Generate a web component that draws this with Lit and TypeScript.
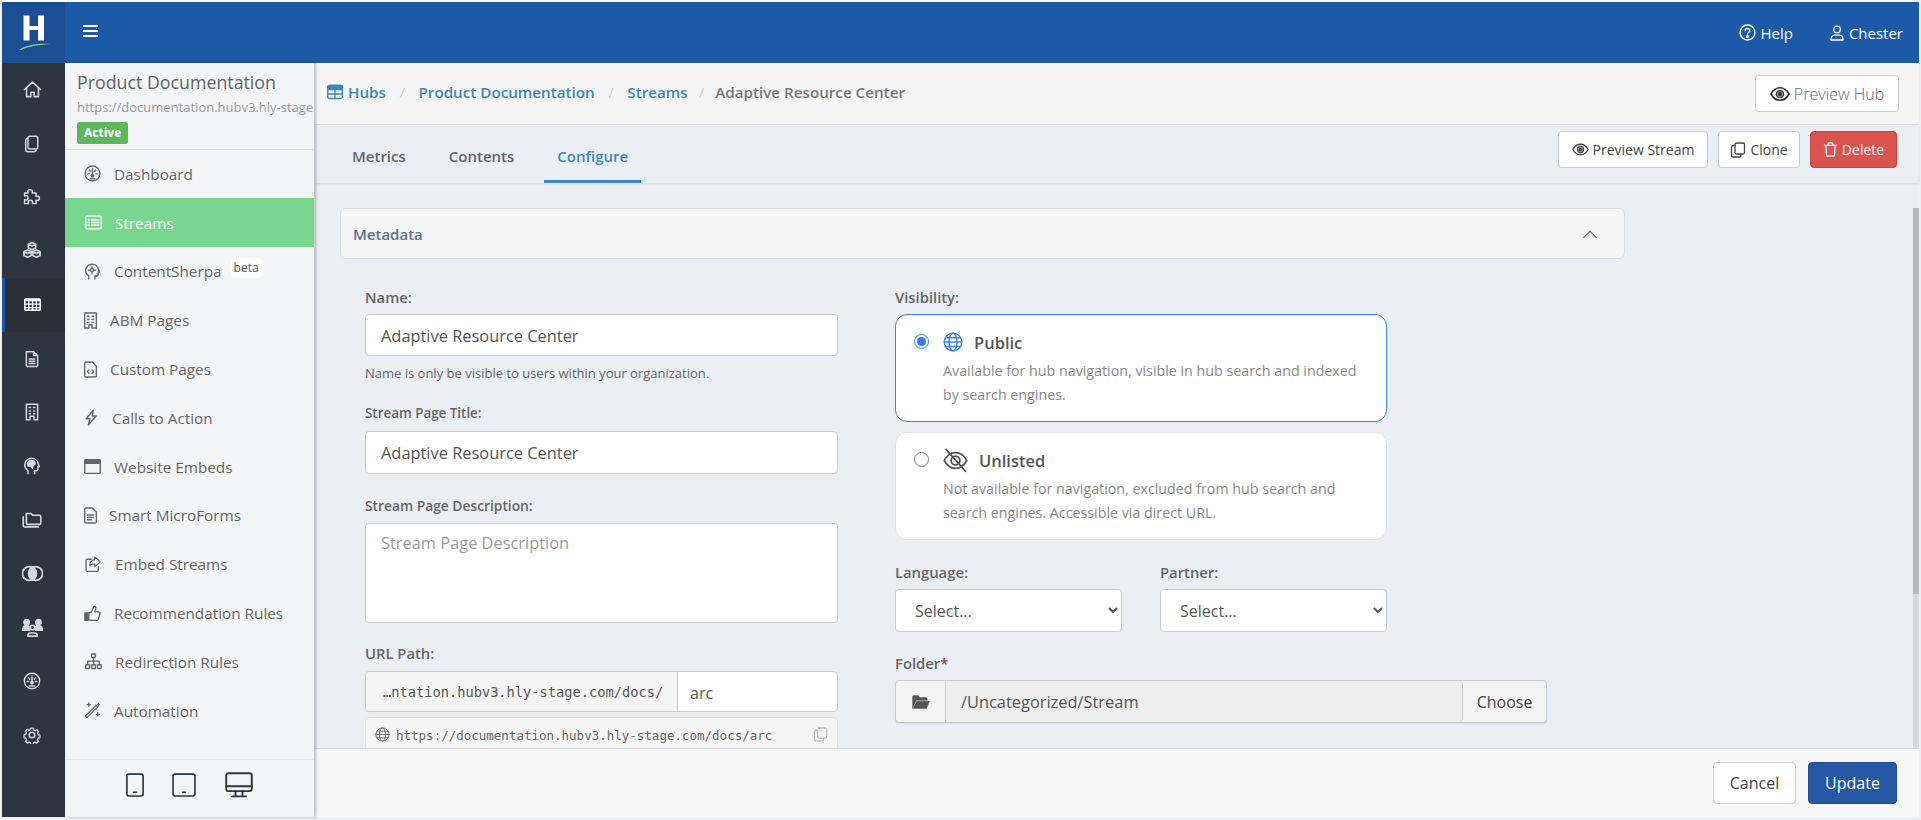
// app.ts — hub stream configure screen
import { LitElement, html, css, svg } from 'lit';
import { customElement } from 'lit/decorators.js';

// Stroke icons, all on a 16x16 box
const ICONS: Record<string, unknown> = {
  house: svg`<path d="M1.2 8 8 1.8 14.8 8M3 6.6V14h3.6v-3.6h2.8V14H13V6.6"/>`,
  files: svg`<path d="M6 1.2h5.500a1.600 1.600 0 0 1 1.600 1.600v8a1.600 1.600 0 0 1-1.600 1.600H6a1.600 1.600 0 0 1-1.600-1.600v-8A1.600 1.600 0 0 1 6 1.200Z"/><path d="M4.400 3H4a1.600 1.600 0 0 0-1.600 1.600v8.200A2 2 0 0 0 4.400 14.800H10a1.600 1.600 0 0 0 1.600-1.600"/>`,
  puzzle: svg`<path d="M6.200 1.500c1.400 0 2.200.8 2.200 1.800 0 .5-.3.9-.4 1.200h3.600v3c.4-.2.8-.4 1.200-.4 1 0 1.800.8 1.800 2s-.8 2-1.800 2c-.4 0-.8-.2-1.200-.4v3.200H8.200c.2-.4.4-.8.4-1.200 0-1-.9-1.800-2-1.800s-2 .8-2 1.800c0 .4.2.8.4 1.200H1.400v-3.600c.4.2.8.4 1.200.4 1 0 1.800-.8 1.800-2s-.8-2-1.800-2c-.4 0-.8.2-1.200.4V4.500h3.200c-.1-.3-.4-.7-.4-1.200 0-1 .8-1.800 2-1.800Z"/>`,
  boxes: svg`<path d="m8 1.200 3 1.400v3L8 7 5 5.600v-3Zm-3.500 6 3 1.400v3l-3 1.400-3-1.400v-3Zm7 0 3 1.400v3l-3 1.400-3-1.400v-3ZM5 2.600l3 1.400 3-1.400M1.500 8.600l3 1.400 3-1.400m1 0 3 1.400 3-1.400"/>`,
  grid: svg`<path class="fill solid" fill-rule="evenodd" d="M1.500 2h13A1.500 1.500 0 0 1 16 3.500v9a1.500 1.500 0 0 1-1.500 1.500h-13A1.500 1.500 0 0 1 0 12.500v-9A1.500 1.500 0 0 1 1.500 2ZM1.500 5v2h2.400V5Zm3.700 0v2h2.200V5Zm3.500 0v2h2.200V5Zm3.500 0v2h2.300V5ZM1.500 8.300v2h2.400v-2Zm3.700 0v2h2.200v-2Zm3.500 0v2h2.200v-2Zm3.500 0v2h2.300v-2ZM1.500 11.500v1.300h2.400v-1.300Zm3.700 0v1.300h2.200v-1.300Zm3.500 0v1.300h2.200v-1.300Zm3.500 0v1.300h2.300v-1.300Z"/>`,
  doc: svg`<path d="M3 1.500h6.500L13 5v8.500a1.200 1.200 0 0 1-1.200 1.200H4.200A1.200 1.200 0 0 1 3 13.500ZM9.500 1.500V5H13"/><path d="M5.500 8h5M5.500 10h5M5.500 12h5"/>`,
  building: svg`<path d="M3 1.200h10v13.600H9.800v-3H6.200v3H3Z"/><path d="M5.500 4h1.200M9.300 4h1.200M5.500 7h1.200M9.300 7h1.200M5.500 9.500h1.200M9.300 9.500h1.200"/>`,
  brain: svg`<path d="M4.500 14.800v-2.600C2.800 11 1.500 9.300 1.500 7.200 1.500 3.800 4.200 1.200 7.600 1.200c3.100 0 5.700 2.100 6 5l1 2.300h-1.300v2.300c0 .8-.6 1.400-1.400 1.400h-1.600v2.600"/><path class="fill" d="M4 6c.4-1.800 2-3 3.800-2.800 1.600.2 3 1.500 3 3L9 7.500 8.400 10 6.500 8 4.500 8Z"/>`,
  folders: svg`<path d="M3.500 4V2.800h3.700l1.300 1.400h5.500a1 1 0 0 1 1 1v5.300a1 1 0 0 1-1 1H4.500a1 1 0 0 1-1-1Z"/><path d="M1 5.500v6.700a1.300 1.300 0 0 0 1.300 1.300H13"/>`,
  circles: svg`<circle cx="5.600" cy="8" r="5.300"/><circle cx="10.400" cy="8" r="5.300"/><path class="fill" d="M8 3.270A5.300 5.300 0 0 0 8 12.730 5.300 5.300 0 0 0 8 3.270Z"/>`,
  people: svg`<circle cx="8" cy="8" r="1.700"/><path d="M4.500 14.500v-.6c0-1 .9-1.700 2-1.700h3c1.100 0 2 .7 2 1.700v.6Z"/><circle class="fill" cx="3.500" cy="4" r="2"/><circle class="fill" cx="12.500" cy="4" r="2"/><path class="fill" d="M.5 10c0-2 1-3.400 3-3.400 1 0 1.500.3 2 .8-.4 1-.2 1.800.3 2.600Zm15 0c0-2-1-3.400-3-3.400-1 0-1.500.3-2 .8.400 1 .2 1.800-.3 2.600Z"/>`,
  gauge: svg`<circle cx="8" cy="8" r="6.800"/><path d="M8 3.500v5.500M5 5.200l1 1.300M11 5.200 10 6.500M3.800 8.500h1.400M10.800 8.500h1.400M5.500 12.500h5"/><circle class="fill" cx="8" cy="9.500" r="1"/>`,
  gear: svg`<circle cx="8" cy="8" r="2.500"/><path d="M6.700 1.300h2.600l.4 1.900 1.300.6 1.700-1 1.800 1.900-1 1.600.5 1.300 1.800.5v2.600l-1.800.5-.5 1.300 1 1.700-1.800 1.800-1.700-1-1.300.5-.4 1.800H6.700l-.4-1.800-1.300-.5-1.700 1-1.800-1.800 1-1.700-.5-1.300-1.800-.5V7.600l1.800-.5.5-1.300-1-1.600 1.800-1.900 1.700 1 1.300-.6Z" transform="translate(.8 .8) scale(.9)"/>`,
  dash: svg`<circle cx="8" cy="8" r="7"/><path d="M8 3.200v5.600M5.200 4.800l1 1.500M10.800 4.800l-1 1.500M3.500 8.300h1.600M10.900 8.300h1.600M5.800 13h4.400"/><circle class="fill" cx="8" cy="10" r="1.200"/>`,
  list: svg`<rect x=".7" y="2" width="14.600" height="12" rx="1.400"/><path d="M3 5.500h1.200M6 5.500h7M3 8h1.200M6 8h7M3 10.500h1.200M6 10.500h7"/>`,
  sherpa: svg`<path d="M4.500 15v-2.800C2.800 11 1.500 9.300 1.500 7.200 1.500 3.800 4.200 1.200 7.600 1.200c3.100 0 5.700 2.100 6 5l1 2.300h-1.300v2.300c0 .8-.6 1.400-1.400 1.400h-1.600V15"/><circle cx="7.500" cy="6.800" r="1.500"/><path d="M7.500 3.400v1.200M7.500 9v1.200M4.200 6.800h1.200M9.700 6.800h1.100"/>`,
  abm: svg`<path d="M2.500 1h11v14h-4v-3h-3v3h-4Z"/><path d="M5 4h1.500M9.500 4H11M5 7h1.500M9.500 7H11M5 9.800h1.500M9.500 9.800H11"/>`,
  code: svg`<path d="M2.500 2.200A1.200 1.200 0 0 1 3.700 1h6L13.500 5v8.800a1.200 1.200 0 0 1-1.200 1.200H3.700a1.200 1.200 0 0 1-1.200-1.200Z"/><path d="M6.500 8.500 5 10l1.500 1.500M9.500 8.500 11 10l-1.500 1.500"/>`,
  bolt: svg`<path d="M9.800 1 3 9.200h3.600L5 15l7.300-8.400H8.600Z"/>`,
  browser: svg`<rect x=".7" y="1.500" width="14.600" height="13" rx="1.200"/><path class="fill" d="M.7 2.700c0-.7.5-1.200 1.200-1.200h12.200c.7 0 1.200.5 1.200 1.200V5H.7Z"/>`,
  form: svg`<path d="M2.500 2.200A1.200 1.200 0 0 1 3.700 1h6L13.500 5v8.800a1.200 1.200 0 0 1-1.200 1.200H3.700a1.200 1.200 0 0 1-1.200-1.200Z"/><path d="M5.200 7.500h5.600M5.200 9.800h5.600M5.200 12h3.600"/>`,
  share: svg`<path d="M9 8.800v2.900l6-5-6-5v2.900C5.500 4.600 3.800 7.300 3.800 10.500 5.200 9 7 8.800 9 8.800Z" transform="translate(1 -.5) scale(.9)"/><path d="M12.500 10v3.300a1.200 1.200 0 0 1-1.200 1.200H2.200A1.200 1.200 0 0 1 1 13.300V4.200A1.200 1.200 0 0 1 2.200 3H6"/>`,
  thumb: svg`<path d="M4.500 7.200h2l2.300-4.500c.2-1 .8-1.500 1.500-1.200.8.300 1 1.100.8 2L10.100 6.500h3.600c1 0 1.600.9 1.300 1.800l-1.500 5.100c-.2.700-.8 1.100-1.500 1.100H7c-1 0-2.500-.5-2.500-.5Z"/><path class="fill" d="M.8 7.500h3.200v7H.8Z"/>`,
  tree: svg`<rect x="6.200" y="1" width="3.600" height="3.200" rx=".6"/><rect x=".7" y="11" width="3.600" height="3.600" rx=".6"/><rect x="6.200" y="11" width="3.600" height="3.600" rx=".6"/><rect x="11.700" y="11" width="3.600" height="3.600" rx=".6"/><path d="M8 4.200V11M2.500 11V7.600h11V11"/>`,
  magic: svg`<path d="m1.300 14.700 10-10 1.500 1.500-10 10Z" transform="translate(0 -1.500)"/><path d="M4.500 1v3M3 2.500h3M13.500 1.500v2M12.500 2.500h2M13 10v3M11.500 11.500h3"/>`,
  phone: svg`<rect x="2.600" y=".7" width="10.800" height="14.600" rx="1.300"/><path d="M7 12.800h2"/>`,
  tablet: svg`<rect x=".7" y=".7" width="14.600" height="14.600" rx="1.300"/><path d="M7 12.800h2"/>`,
  desktop: svg`<rect x=".7" y="1.300" width="14.600" height="10.200" rx="1.200"/><path d="M.7 8.700h14.600M6 11.500v3M10 11.500v3M4 14.500h8"/>`,
  help: svg`<circle cx="8" cy="8" r="7"/><path d="M5.800 6.200C5.900 4.900 6.800 4.200 8 4.200c1.300 0 2.200.8 2.200 1.900 0 1.700-2.200 1.700-2.200 3.400"/><circle class="fill" cx="8" cy="11.700" r=".8"/>`,
  person: svg`<circle cx="8" cy="4.500" r="3.300"/><path d="M2 15c0-3 1.500-4.800 3.500-4.800h5C12.500 10.200 14 12 14 15Z"/>`,
  eye: svg`<path d="M.8 8C2.500 4.800 5 3 8 3s5.500 1.800 7.200 5C13.500 11.200 11 13 8 13S2.500 11.200.8 8Z"/><circle cx="8" cy="8" r="2.800"/><circle class="fill" cx="8" cy="8" r="1.100"/>`,
  eyeoff: svg`<path d="M.8 8C2.500 4.800 5 3 8 3s5.500 1.800 7.200 5C13.500 11.200 11 13 8 13S2.500 11.200.8 8Z"/><circle cx="8" cy="8" r="2.800"/><path d="M2 1l12.500 14"/>`,
  clone: svg`<rect x="5" y="1" width="9.500" height="11" rx="1.500"/><path d="M5 3.500H3A1.500 1.500 0 0 0 1.500 5v8.500A1.500 1.500 0 0 0 3 15h6.500a1.500 1.500 0 0 0 1.500-1.500V12"/>`,
  trash: svg`<path d="M1.500 3.500h13M5.500 3.500V2A1 1 0 0 1 6.500 1h3a1 1 0 0 1 1 1v1.500M3 3.500l.8 10.500a1 1 0 0 0 1 1h6.400a1 1 0 0 0 1-1L13 3.500"/>`,
  table: svg`<rect x=".7" y="1.500" width="14.600" height="13" rx="1.500"/><path class="fill" d="M.7 3c0-.8.7-1.500 1.500-1.500h11.600c.8 0 1.500.7 1.500 1.500v2.500H.7Z"/><path d="M.7 10h14.600M8 5v9.500"/>`,
  chevron: svg`<path d="M2.500 11 8 5.500l5.500 5.500"/>`,
  globe: svg`<circle cx="8" cy="8" r="7"/><ellipse cx="8" cy="8" rx="3.200" ry="7"/><path d="M1 8h14M2 4.500h12M2 11.500h12"/>`,
  folder: svg`<path class="fill" d="M.5 3.500A1.200 1.200 0 0 1 1.700 2.300h3.800l1.500 1.700h5.300a1.200 1.200 0 0 1 1.200 1.200V6.500H3.800L.5 13Z"/><path class="fill" d="M4.200 7.400h11.300L13 13.700H.8Z"/>`,
};

function icon(name: string, size = 16, stroke = 1.3) {
  return html`<svg class="icon" viewBox="0 0 16 16" width=${size} height=${size} stroke-width=${stroke}>${ICONS[name]}</svg>`;
}

const RAIL: [string, number][] = [
  ['house', 19], ['files', 18], ['puzzle', 18], ['boxes', 20], ['grid', 17], ['doc', 18], ['building', 18],
  ['brain', 18], ['folders', 20], ['circles', 21], ['people', 21], ['gauge', 18], ['gear', 18],
];

// name, icon, width of the icon box, gap to the label
const MENU: [string, string, number, number][] = [
  ['Dashboard', 'dash', 17, 13],
  ['Streams', 'list', 18, 13],
  ['ContentSherpa', 'sherpa', 17, 13],
  ['ABM Pages', 'abm', 13, 13],
  ['Custom Pages', 'code', 13, 13],
  ['Calls to Action', 'bolt', 14, 14],
  ['Website Embeds', 'browser', 16, 14],
  ['Smart MicroForms', 'form', 13, 12],
  ['Embed Streams', 'share', 18, 13],
  ['Recommendation Rules', 'thumb', 17, 13],
  ['Redirection Rules', 'tree', 18, 13],
  ['Automation', 'magic', 17, 13],
];

@customElement('app-root')
export class AppRoot extends LitElement {
  static styles = css`
    :host {
      display: block;
      height: 820px;
      background: #eef0f3;
      font-family: 'Open Sans', 'Liberation Sans', sans-serif;
      color: #666;
      font-size: 14px;
    }
    * { box-sizing: border-box; }

    .icon { fill: none; stroke: currentColor; stroke-linecap: round; stroke-linejoin: round; flex: none; display: block; }
    .icon .fill { fill: currentColor; }
    .icon .solid { stroke: none; }

    .frame {
      height: 817px;
      margin: 0 2px 0 2px;
      padding-top: 2px;
      display: grid;
      grid-template-columns: 63px 1fr;
      grid-template-rows: 61px 1fr;
      background: #fff;
    }

    .logo { background: #1a4f94; display: flex; align-items: center; justify-content: center; }
    .topbar { background: #1c5aa8; color: #fff; display: flex; align-items: center; font-size: 15px; padding: 0 16px 0 18px; }
    .burger { width: 15px; height: 12px; margin-bottom: 3px; border-top: 2px solid #fff; border-bottom: 2px solid #fff; position: relative; }
    .burger::after { content: ''; position: absolute; left: 0; right: 0; top: 3px; height: 2px; background: #fff; }
    .top-right { margin-left: auto; display: flex; gap: 36px; }
    .top-link { display: flex; align-items: center; gap: 4px; }

    .rail { background: #2d353f; color: #d5dae0; display: flex; flex-direction: column; }
    .rail-item { height: 53.75px; display: flex; align-items: center; justify-content: center; padding-right: 3px; }
    .rail-item.on { background: #2a3038; border-left: 3px solid #1c5aa8; color: #fff; }
    .rail-item.on .icon { margin-left: -3px; }

    .shell { display: flex; min-width: 0; min-height: 0; }
    .side { width: 250px; flex: none; background: #f4f5f7; display: flex; flex-direction: column; border-right: 1px solid #c8cacd; box-shadow: 1px 0 3px rgba(0,0,0,.25); z-index: 1; overflow: hidden; }
    .side-head { height: 86.5px; flex: none; padding: 7px 0 0 12px; border-bottom: 1px solid #dfe1e4; }
    .side-title { font-size: 17.8px; line-height: 24px; color: #5f6368; white-space: nowrap; }
    .side-url { font-size: 13px; line-height: 18px; margin-top: 4px; color: #999; white-space: nowrap; }
    .badge { display: inline-block; margin-top: 6px; background: #5cb85c; color: #fff; font-size: 12px; font-weight: 700; line-height: 22px; height: 22px; padding: 0 7px; border-radius: 3px; }
    .menu { flex: 1; }
    .menu-item { height: 48.8px; display: flex; align-items: center; padding-left: 19px; color: #666; font-size: 15.3px; }
    .menu-item.on { background: #79d68f; color: #fff; }
    .menu-icon { display: flex; justify-content: center; }
    .beta { align-self: flex-start; margin: 11px 0 0 8px; background: #fff; font-size: 12px; line-height: 16px; padding: 2px 4px; border-radius: 6px; color: #555; }
    .devices { height: 58px; flex: none; border-top: 1px solid #e6e8ea; display: flex; align-items: center; padding: 0 0 8px 58px; color: #2d353f; }
    .devices .icon:nth-child(2) { margin: 0 29px 0 25px; }

    .main { flex: 1; min-width: 0; display: flex; flex-direction: column; background: #ebeef3; }
    .crumbs { height: 62px; flex: none; background: #f5f5f5; border-bottom: 1px solid #dcdcdc; display: flex; align-items: center; padding: 0 20px 3px 12px; font-size: 15.2px; font-weight: 600; }
    .crumbs a { color: #3a87bd; display: flex; align-items: center; gap: 5px; }
    .crumbs .sep { color: #ccc; font-weight: 400; margin: 0 13.5px; }
    .crumbs .sep.last { margin: 0 11px; }
    .crumbs .cur { color: #777; }
    .btn { display: inline-flex; align-items: center; justify-content: center; gap: 4px; background: #fff; border: 1px solid #ccc; border-radius: 4px; color: #444; font-size: 14px; height: 37px; }
    .preview-hub { margin: 3px 0 0 auto; width: 144px; font-size: 16px; color: #5f6770; font-weight: 300; }
    .preview-hub .icon { color: #333; }

    .tabs { height: 58px; flex: none; display: flex; align-items: flex-end; padding: 0 22px 0 24px; gap: 17px; box-shadow: 0 1px 2px rgba(0,0,0,.08); position: relative; }
    .tab { height: 58px; padding: 4px 13px 0; display: flex; align-items: center; font-size: 15px; font-weight: 600; color: #666; }
    .tab.on { color: #3a87bd; border-bottom: 3px solid #3a87bd; padding-top: 7px; }
    .tab-actions { margin-left: auto; align-self: flex-start; padding-top: 6px; display: flex; gap: 10px; }
    .btn.stream { width: 150px; }
    .btn.clone { width: 82px; }
    .btn.danger { background: #d9534f; border-color: #d43f3a; color: #fff; width: 87px; }

    .scroll { flex: 1; min-height: 0; overflow: hidden; padding: 25px 0 0 25px; position: relative; }
    .scrollbar { position: absolute; top: 25px; right: 0; bottom: 0; width: 6px; background: #d5d8dd; }
    .scrollbar::before { content: ''; display: block; height: 386px; background: #b5b8bd; }
    .meta-head { width: 1285px; height: 51px; background: #f5f5f5; border: 1px solid #ddd; border-radius: 6px; display: flex; align-items: center; justify-content: space-between; padding: 0 25px 0 12px; font-size: 15px; font-weight: 600; color: #5d7185; }
    .form { display: flex; gap: 57px; padding: 28px 0 0 25px; }
    .col-l { width: 473px; flex: none; }
    .col-r { width: 652px; flex: none; }

    label { display: block; font-weight: 600; font-size: 14.8px; line-height: 20px; color: #666; margin-bottom: 7px; }
    label.title { font-size: 13.4px; margin: 21px 0 8px; }
    label.desc { font-size: 13.8px; margin-top: 22px; }
    label.url { margin: 20px 0 8px; }
    .field { display: block; width: 100%; height: 42px; border: 1px solid #ccc; border-radius: 4px; background: #fff; padding: 0 15px; font: 400 16.4px/1.4 'Open Sans', sans-serif; color: #555; outline: none; }
    input.tall { height: 43px; }
    textarea.field { height: 100px; padding-top: 8px; resize: none; }
    textarea.field::placeholder { color: #999; }
    select.field { height: 43px; font-size: 16px; }
    .help { font-size: 13px; line-height: 18px; margin: 8px 0 0; color: #666; }

    .group { display: flex; border: 1px solid #ccc; border-radius: 4px; background: #fff; height: 41px; overflow: hidden; }
    .addon { background: #f5f5f5; border-right: 1px solid #ccc; display: flex; align-items: center; }
    .addon-url { width: 312px; padding-left: 17px; font: 13.7px 'DejaVu Sans Mono', monospace; color: #555; white-space: nowrap; }
    .group-val { padding-left: 12px; display: flex; align-items: center; font-size: 16px; color: #555; padding-top: 2px; }
    .full-url { margin-top: 5px; height: 40px; border: 1px solid #e1e1e1; border-radius: 4px; background: #f5f5f5; display: flex; align-items: flex-start; padding: 9px 9px 0; gap: 6px; font: 12.5px/18px 'DejaVu Sans Mono', monospace; color: #666; }
    .full-url .copy { margin-left: auto; color: #aaa; }

    .vis { width: 492px; background: #fff; border: 1px solid #e1e3e6; border-radius: 12px; padding: 16px 24px 0 18px; height: 108px; display: grid; grid-template-columns: 15px 1fr; column-gap: 14px; }
    .vis.on { border-color: #3b82f6; }
    .vis + .vis { margin-top: 10px; }
    .vis input { width: 15px; height: 15px; margin: 3px 0 0; accent-color: #2f7bf0; }
    .vis-head { display: flex; align-items: center; gap: 11px; height: 22px; font-size: 16.5px; font-weight: 600; color: #555; }
    .vis.on .vis-head .icon { color: #3b82f6; }
    .vis-desc { margin: 6px 0 0; line-height: 23.5px; color: #888; font-size: 14.25px; }

    .pair { display: flex; gap: 38px; width: 492px; margin-top: 22px; }
    .pair > div { width: 227px; flex: none; }
    .folder-block { margin-top: 21px; }
    .req { color: #a94442; }
    .folder { display: flex; height: 43px; width: 652px; border: 1px solid #ccc; border-radius: 4px; background: #f3f3f3; box-shadow: 0 1px 2px rgba(0,0,0,.08); overflow: hidden; font-size: 16.4px; }
    .folder-icon { width: 50px; border-right: 1px solid #ccc; display: flex; align-items: center; justify-content: center; color: #555; }
    .folder-path { flex: 1; background: #eee; border-right: 1px solid #ccc; display: flex; align-items: center; padding-left: 15px; color: #555; border-radius: 0 4px 4px 0; }
    .choose { width: 83px; font-size: 16px; display: flex; align-items: center; justify-content: center; color: #444; }

    .footer { height: 69px; flex: none; background: #f7f7f7; border-top: 1px solid #dcdcdc; display: flex; align-items: center; justify-content: flex-end; padding: 0 22px 0 0; gap: 12px; font-size: 16px; }
    .footer .btn { height: 42px; font-size: 16px; }
    .footer .cancel { width: 83px; color: #444; }
    .btn.update { width: 89px; background: #2558a5; border-color: #1f4e94; color: #fff; }
  `;

  render() {
    return html`
      <div class="frame">
        <div class="logo">
          <svg width="40" height="44" viewBox="0 0 40 44">
            <path fill="#fff" d="M9.500 4.500h6v10.500H24V4.500h6v25h-6V19h-8.500v10.500h-6Z"/>
            <path fill="#7fd17f" d="M5.500 38.500C12 34 25 32 37.500 33 26 33.500 14 35.500 7.500 38.800c-1 .4-2.500.2-2-.3Z"/>
          </svg>
        </div>
        <div class="topbar">
          <div class="burger"></div>
          <div class="top-right">
            <div class="top-link">${icon('help', 17)}Help</div>
            <div class="top-link">${icon('person', 16)}Chester</div>
          </div>
        </div>
        <div class="rail">
          ${RAIL.map(([n, size], i) => html`<div class="rail-item ${i === 4 ? 'on' : ''}">${icon(n, size)}</div>`)}
        </div>
        <div class="shell">
          <aside class="side">
            <div class="side-head">
              <div class="side-title">Product Documentation</div>
              <div class="side-url">https://documentation.hubv3.hly-stage.com</div>
              <span class="badge">Active</span>
            </div>
            <div class="menu">
              ${MENU.map(([name, ic, w, gap]) => html`
                <div class="menu-item ${name === 'Streams' ? 'on' : ''}">
                  <span class="menu-icon" style="width:${w}px;margin-right:${gap}px">${icon(ic, 17)}</span>
                  ${name}
                  ${name === 'ContentSherpa' ? html`<span class="beta">beta</span>` : ''}
                </div>`)}
            </div>
            <div class="devices">
              ${icon('phone', 24, 1.1)}${icon('tablet', 24, 1.1)}${icon('desktop', 28, 1.1)}
            </div>
          </aside>
          <div class="main">
            <div class="crumbs">
              <a>${icon('table', 16)}Hubs</a><span class="sep">/</span>
              <a>Product Documentation</a><span class="sep">/</span>
              <a>Streams</a><span class="sep last">/</span>
              <span class="cur">Adaptive Resource Center</span>
              <span class="btn preview-hub">${icon('eye', 20)}Preview Hub</span>
            </div>
            <div class="tabs">
              <div class="tab">Metrics</div>
              <div class="tab">Contents</div>
              <div class="tab on">Configure</div>
              <div class="tab-actions">
                <span class="btn stream">${icon('eye', 17)}Preview Stream</span>
                <span class="btn clone">${icon('clone', 16)}Clone</span>
                <span class="btn danger">${icon('trash', 15)}Delete</span>
              </div>
            </div>
            <div class="scroll">
              <div class="scrollbar"></div>
              <div class="meta-head">Metadata ${icon('chevron', 18, 1.2)}</div>
              <div class="form">
                <div class="col-l">
                  <label>Name:</label>
                  <input class="field" .value=${'Adaptive Resource Center'} />
                  <p class="help">Name is only be visible to users within your organization.</p>
                  <label class="title">Stream Page Title:</label>
                  <input class="field tall" .value=${'Adaptive Resource Center'} />
                  <label class="desc">Stream Page Description:</label>
                  <textarea class="field" placeholder="Stream Page Description"></textarea>
                  <label class="url">URL Path:</label>
                  <div class="group">
                    <div class="addon addon-url">…ntation.hubv3.hly-stage.com/docs/</div>
                    <div class="group-val">arc</div>
                  </div>
                  <div class="full-url">
                    ${icon('globe', 15, 1)}
                    <span>https://documentation.hubv3.hly-stage.com/docs/arc</span>
                    <span class="copy">${icon('clone', 15, 1)}</span>
                  </div>
                </div>
                <div class="col-r">
                  <label>Visibility:</label>
                  <div class="vis on">
                    <input type="radio" name="vis" checked />
                    <div>
                      <div class="vis-head">${icon('globe', 20, 1.2)}Public</div>
                      <p class="vis-desc">Available for hub navigation, visible in hub search and indexed by search engines.</p>
                    </div>
                  </div>
                  <div class="vis">
                    <input type="radio" name="vis" />
                    <div>
                      <div class="vis-head">${icon('eyeoff', 25, 1.1)}Unlisted</div>
                      <p class="vis-desc">Not available for navigation, excluded from hub search and search engines. Accessible via direct URL.</p>
                    </div>
                  </div>
                  <div class="pair">
                    <div>
                      <label>Language:</label>
                      <select class="field"><option>Select...</option></select>
                    </div>
                    <div>
                      <label>Partner:</label>
                      <select class="field"><option>Select...</option></select>
                    </div>
                  </div>
                  <div class="folder-block">
                    <label>Folder<span class="req">*</span></label>
                    <div class="folder">
                      <div class="folder-icon">${icon('folder', 18, 0.4)}</div>
                      <div class="folder-path">/Uncategorized/Stream</div>
                      <div class="choose">Choose</div>
                    </div>
                  </div>
                </div>
              </div>
            </div>
            <div class="footer">
              <span class="btn cancel">Cancel</span>
              <span class="btn update">Update</span>
            </div>
          </div>
        </div>
      </div>
    `;
  }
}
